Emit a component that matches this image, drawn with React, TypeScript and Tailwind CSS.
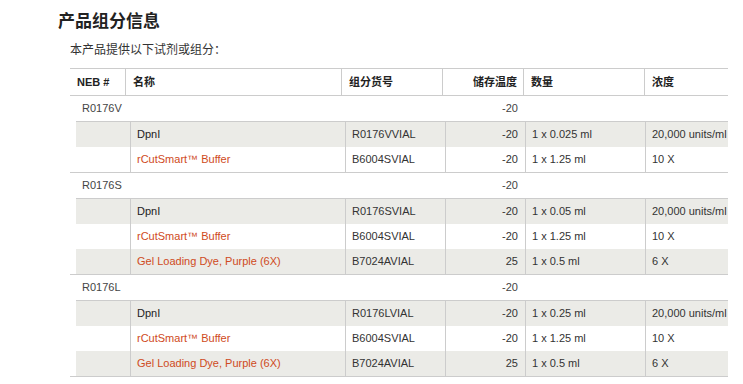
import React from "react";

type Sub = { name: string; link?: boolean; code: string; temp: string; qty: string; conc: string };
type Group = { neb: string; temp: string; subs: Sub[] };

const groups: Group[] = [
  {
    neb: "R0176V",
    temp: "-20",
    subs: [
      { name: "DpnI", code: "R0176VVIAL", temp: "-20", qty: "1 x 0.025 ml", conc: "20,000 units/ml" },
      { name: "rCutSmart™ Buffer", link: true, code: "B6004SVIAL", temp: "-20", qty: "1 x 1.25 ml", conc: "10 X" },
    ],
  },
  {
    neb: "R0176S",
    temp: "-20",
    subs: [
      { name: "DpnI", code: "R0176SVIAL", temp: "-20", qty: "1 x 0.05 ml", conc: "20,000 units/ml" },
      { name: "rCutSmart™ Buffer", link: true, code: "B6004SVIAL", temp: "-20", qty: "1 x 1.25 ml", conc: "10 X" },
      { name: "Gel Loading Dye, Purple (6X)", link: true, code: "B7024AVIAL", temp: "25", qty: "1 x 0.5 ml", conc: "6 X" },
    ],
  },
  {
    neb: "R0176L",
    temp: "-20",
    subs: [
      { name: "DpnI", code: "R0176LVIAL", temp: "-20", qty: "1 x 0.25 ml", conc: "20,000 units/ml" },
      { name: "rCutSmart™ Buffer", link: true, code: "B6004SVIAL", temp: "-20", qty: "1 x 1.25 ml", conc: "10 X" },
      { name: "Gel Loading Dye, Purple (6X)", link: true, code: "B7024AVIAL", temp: "25", qty: "1 x 0.5 ml", conc: "6 X" },
    ],
  },
];

const font = { fontFamily: '"Liberation Sans", Arial, "Noto Sans CJK SC", sans-serif' };

export default function App() {
  return (
    <div className="w-[743px] h-[384px] bg-white overflow-hidden pl-[58px] pt-[10px] text-[#333]" style={font}>
      <h2 className="text-[17px] leading-[24px] font-bold text-[#222]">产品组分信息</h2>
      <p className="ml-[12px] mt-[8px] text-[12px] leading-[16px] text-[#333]">本产品提供以下试剂或组分：</p>
      <div className="ml-[12px] mt-[10px] w-[658px] border-t border-[#cccccc] text-[11px]">
        {/* header */}
        <div className="flex h-[27px] border-b border-[#cccccc] font-bold text-[#222] items-stretch">
          <div className="w-[55px] pl-[7px] flex items-center">NEB #</div>
          <div className="w-[216px] border-l border-[#cccccc] pl-[7px] flex items-center">名称</div>
          <div className="w-[101px] border-l border-[#cccccc] pl-[7px] flex items-center">组分货号</div>
          <div className="w-[81px] border-l border-[#cccccc] pr-[6px] flex items-center justify-end">储存温度</div>
          <div className="w-[121px] border-l border-[#cccccc] pl-[7px] flex items-center">数量</div>
          <div className="w-[84px] border-l border-[#cccccc] pl-[7px] flex items-center">浓度</div>
        </div>
        {groups.map((g) => (
          <div key={g.neb} className="border-b border-[#cccccc]">
            <div className="ml-[6px] flex h-[25px] items-center text-[#444]">
              <div className="w-[54px] pl-[6px]">{g.neb}</div>
              <div className="w-[215px]" />
              <div className="w-[100px]" />
              <div className="w-[80px] pr-[7px] text-right">{g.temp}</div>
            </div>
            <div className="ml-[6px] border-t border-[#cccccc]">
              {g.subs.map((s, i) => (
                <div key={i} className={`flex h-[25px] items-stretch ${i % 2 === 0 ? "bg-[#ebebe7]" : "bg-white"}`}>
                  <div className="w-[54px]" />
                  <div className={`w-[215px] border-l border-[#cccccc] pl-[6px] flex items-center ${s.link ? "text-[#cf4a22]" : "text-[#222]"}`}>
                    {s.name}
                  </div>
                  <div className="w-[100px] border-l border-[#cccccc] pl-[6px] flex items-center">{s.code}</div>
                  <div className="w-[80px] border-l border-[#cccccc] pr-[7px] flex items-center justify-end">{s.temp}</div>
                  <div className="w-[120px] border-l border-[#cccccc] pl-[6px] flex items-center">{s.qty}</div>
                  <div className="w-[83px] border-l border-[#cccccc] pl-[6px] flex items-center whitespace-nowrap">{s.conc}</div>
                </div>
              ))}
            </div>
          </div>
        ))}
      </div>
    </div>
  );
}
